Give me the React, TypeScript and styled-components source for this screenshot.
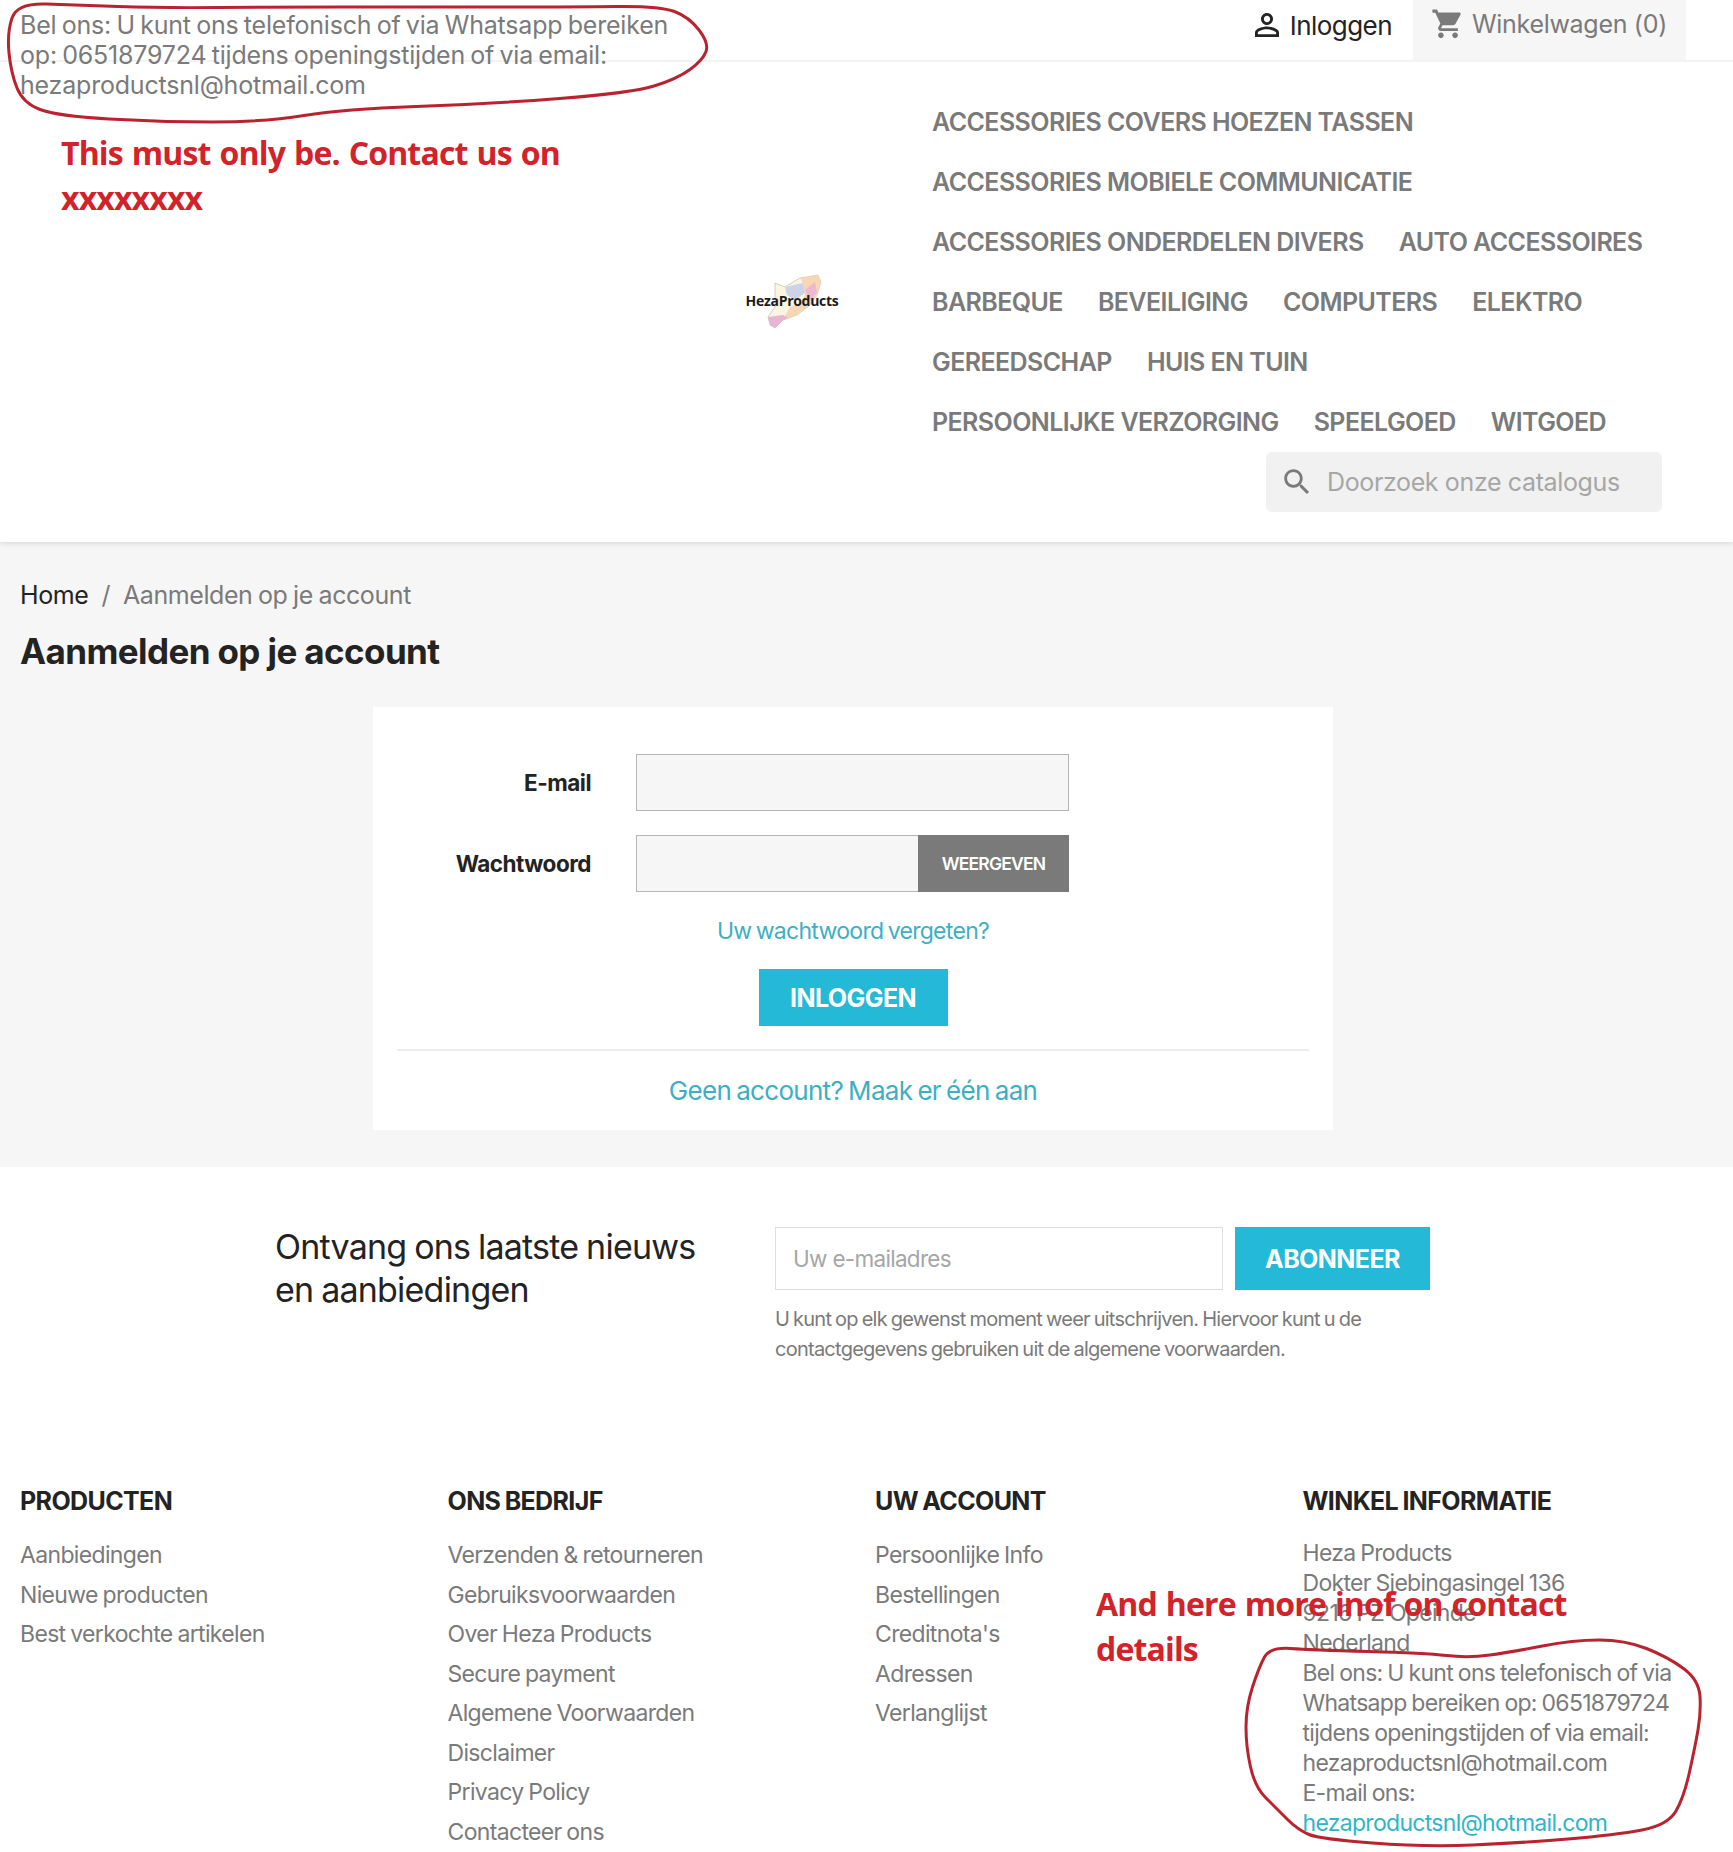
import React from "react";
import styled, { createGlobalStyle } from "styled-components";

const Global = createGlobalStyle`
  * { box-sizing: border-box; }
  html, body { margin: 0; padding: 0; background: #fff; }
  body { font-family: Inter, "Noto Sans", sans-serif; color: #7a7a7a; }
`;

const Page = styled.div`
  position: relative;
  width: 1733px;
  height: 1852px;
  overflow: hidden;
  background: #fff;
`;

const Header = styled.header`
  position: relative;
  background: #fff;
  box-shadow: 0 2px 5px rgba(0, 0, 0, 0.11);
`;

const TopBar = styled.div`
  display: flex;
  justify-content: space-between;
  height: 62px;
  padding: 0 47px 0 20px;
  border-bottom: 2px solid #f3f3f3;
`;

const TopInfo = styled.div`
  width: 672px;
  padding-top: 10px;
  font-size: 25px;
  line-height: 30px;
  letter-spacing: -0.2px;
  word-spacing: -1.5px;
  color: #7a7a7a;
`;

const TopActions = styled.div`
  display: flex;
  height: 60px;
`;

const SignIn = styled.a`
  display: flex;
  align-items: center;
  gap: 5px;
  height: 50px;
  padding-right: 21px;
  font-size: 26px;
  letter-spacing: -0.55px;
  color: #232323;
`;

const Cart = styled.a`
  display: flex;
  align-items: flex-start;
  gap: 7px;
  width: 273px;
  height: 60px;
  padding: 7px 0 0 18px;
  background: #f6f6f6;
  font-size: 25px;
  line-height: 34px;
  letter-spacing: -0.3px;
  color: #7a7a7a;
`;

const Glyph = styled.svg<{ $size: number; $color: string }>`
  flex: none;
  width: ${(p) => p.$size}px;
  height: ${(p) => p.$size}px;
  fill: ${(p) => p.$color};
`;

const HeaderMain = styled.div`
  display: flex;
  padding: 30px 0 30px 0;
`;

const LogoCol = styled.div`
  display: flex;
  align-items: center;
  justify-content: flex-end;
  width: 932px;
  padding-right: 93px;
`;

const LogoArt = styled.svg`
  width: 96px;
  height: 62px;
  margin-top: -2px;
`;

const NavCol = styled.div`
  display: flex;
  flex-direction: column;
  width: 733px;
`;

const Nav = styled.nav`
  display: flex;
  flex-wrap: wrap;
  column-gap: 35px;
`;

const NavLink = styled.a`
  height: 60px;
  font-size: 25px;
  font-weight: 600;
  line-height: 61px;
  letter-spacing: -0.57px;
  white-space: nowrap;
  color: #7a7a7a;
`;

const NavBreak = styled.span`
  flex-basis: 100%;
  height: 0;
`;

const Search = styled.div`
  display: flex;
  align-items: center;
  align-self: flex-end;
  gap: 13px;
  width: 396px;
  height: 60px;
  margin-right: 3px;
  padding-left: 14px;
  border-radius: 6px;
  background: #f1f1f1;
  font-size: 25px;
  letter-spacing: -0.37px;
  color: #a6a6a6;
`;

const Main = styled.main`
  height: 625px;
  padding: 38px 47px 0 20px;
  background: #f6f6f6;
`;

const Crumbs = styled.div`
  display: flex;
  gap: 13px;
  font-size: 25px;
  line-height: 30px;
  letter-spacing: -0.42px;
  word-spacing: -1px;
  color: #7a7a7a;
`;

const CrumbHome = styled.a`
  color: #232323;
`;

const Title = styled.h1`
  margin: 0;
  padding-top: 19px;
  font-size: 35px;
  font-weight: 700;
  line-height: 44px;
  letter-spacing: -0.6px;
  color: #232323;
`;

const Card = styled.section`
  width: 960px;
  height: 423px;
  margin: 34px auto 0;
  padding: 47px 24px 0;
  background: #fff;
`;

const FormRow = styled.div`
  display: flex;
  align-items: center;
  gap: 45px;
  height: 57px;
  margin-bottom: 24px;
`;

const Label = styled.label`
  width: 194px;
  font-size: 22.5px;
  font-weight: 700;
  letter-spacing: -0.5px;
  text-align: right;
  color: #232323;
`;

const Field = styled.div`
  flex: none;
  width: 433px;
  height: 57px;
  border: 1px solid #b5b5b5;
  background: #f6f6f6;
`;

const PasswordField = styled.div`
  display: flex;
  flex: none;
  width: 433px;
  height: 57px;
`;

const PasswordInput = styled.div`
  flex: 1;
  border: 1px solid #b5b5b5;
  border-right: 0;
  background: #f6f6f6;
`;

const ShowButton = styled.button`
  width: 151px;
  border: 0;
  background: #7a7a7a;
  font-family: inherit;
  font-size: 17.5px;
  font-weight: 600;
  letter-spacing: -0.8px;
  color: #fff;
`;

const CenterLink = styled.a<{ $size: number; $lh: number; $top: number }>`
  display: block;
  margin-top: ${(p) => p.$top}px;
  font-size: ${(p) => p.$size}px;
  line-height: ${(p) => p.$lh}px;
  letter-spacing: -0.7px;
  word-spacing: -1.5px;
  text-align: center;
  color: #3dafc4;
`;

const SubmitWrap = styled.div`
  display: flex;
  justify-content: center;
  margin-top: 23px;
`;

const PrimaryButton = styled.button<{ $w: number; $h: number }>`
  width: ${(p) => p.$w}px;
  height: ${(p) => p.$h}px;
  border: 0;
  background: #24b9d7;
  font-family: inherit;
  font-size: 25px;
  font-weight: 700;
  letter-spacing: -0.55px;
  color: #fff;
`;

const Rule = styled.hr`
  height: 2px;
  margin: 23px 0 0;
  border: 0;
  background: #ececec;
`;

const Newsletter = styled.section`
  display: flex;
  height: 319px;
  padding: 58px 0 0 275px;
`;

const NewsTitle = styled.h2`
  flex: none;
  width: 500px;
  margin: 0;
  font-size: 34px;
  font-weight: 400;
  line-height: 43px;
  letter-spacing: -0.78px;
  word-spacing: -1px;
  color: #232323;
`;

const NewsBody = styled.div`
  width: 660px;
  padding-top: 2px;
`;

const NewsForm = styled.div`
  display: flex;
  gap: 12px;
`;

const NewsInput = styled.div`
  display: flex;
  align-items: center;
  width: 448px;
  height: 63px;
  padding-left: 17px;
  border: 1px solid #dedede;
  font-size: 22.5px;
  letter-spacing: -0.7px;
  color: #a6a6a6;
`;

const NewsNote = styled.p`
  margin: 14px 0 0;
  font-size: 20px;
  line-height: 30px;
  letter-spacing: -0.75px;
  word-spacing: -1px;
  color: #7a7a7a;
`;

const FooterGrid = styled.footer`
  display: grid;
  grid-template-columns: repeat(4, 427.5px);
  padding-left: 20px;
`;

const ColTitle = styled.h3<{ $gap: number }>`
  margin: 0 0 ${(p) => p.$gap}px;
  font-size: 25px;
  font-weight: 700;
  line-height: 30px;
  letter-spacing: -0.62px;
  word-spacing: -1px;
  white-space: nowrap;
  color: #232323;
`;

const LinkList = styled.ul`
  margin: 0;
  padding: 0;
  list-style: none;
`;

const LinkItem = styled.li`
  height: 39.5px;
  font-size: 23px;
  line-height: 39.5px;
  letter-spacing: -0.66px;
  word-spacing: -1px;
  color: #7a7a7a;
`;

const StoreInfo = styled.div`
  width: 400px;
  font-size: 23px;
  line-height: 30px;
  letter-spacing: -0.7px;
  word-spacing: -1px;
  color: #7a7a7a;
`;

const StoreMail = styled.a`
  display: block;
  color: #2fb5c9;
`;

const Annotation = styled.div<{ $x: number; $y: number; $w: number }>`
  position: absolute;
  left: ${(p) => p.$x}px;
  top: ${(p) => p.$y}px;
  width: ${(p) => p.$w}px;
  font-family: "Open Sans", sans-serif;
  font-size: 32px;
  font-weight: 700;
  line-height: 45px;
  letter-spacing: -0.85px;
  word-spacing: 1.5px;
  color: #d2232a;
`;

const Scribble = styled.svg`
  position: absolute;
  left: 0;
  top: 0;
  width: 1733px;
  height: 1852px;
  pointer-events: none;
`;

const smooth = (pts: number[][]) => {
  const mid = (a: number[], b: number[]) => [(a[0] + b[0]) / 2, (a[1] + b[1]) / 2];
  let d = "";
  pts.forEach((p, i) => {
    const next = pts[(i + 1) % pts.length];
    const m = mid(p, next);
    if (i === 0) d += `M${mid(pts[pts.length - 1], p).join(" ")} `;
    d += `Q${p.join(" ")} ${m.join(" ")} `;
  });
  return d + "Z";
};

const topLoop = [[17,3],[75,5],[161,8],[276,7],[402,7],[574,7],[660,6],[689,17],[709,43],[703,60],[677,79],[631,93],[488,104],[344,109],[264,122],[161,122],[57,116],[23,103],[11,73],[7,33]];
const bottomLoop = [[1270,1647],[1311,1650],[1425,1653],[1468,1658],[1512,1652],[1573,1640],[1625,1640],[1668,1657],[1699,1680],[1701,1713],[1695,1747],[1684,1797],[1668,1825],[1616,1835],[1520,1843],[1425,1847],[1320,1839],[1298,1830],[1276,1808],[1255,1787],[1246,1747],[1246,1707],[1259,1667]];

const NAV: (string | null)[] = [
  "ACCESSORIES COVERS HOEZEN TASSEN", null,
  "ACCESSORIES MOBIELE COMMUNICATIE", null,
  "ACCESSORIES ONDERDELEN DIVERS", "AUTO ACCESSOIRES", null,
  "BARBEQUE", "BEVEILIGING", "COMPUTERS", "ELEKTRO", null,
  "GEREEDSCHAP", "HUIS EN TUIN", null,
  "PERSOONLIJKE VERZORGING", "SPEELGOED", "WITGOED",
];

const COLS = [
  { title: "PRODUCTEN", links: ["Aanbiedingen", "Nieuwe producten", "Best verkochte artikelen"] },
  { title: "ONS BEDRIJF", links: ["Verzenden & retourneren", "Gebruiksvoorwaarden", "Over Heza Products", "Secure payment", "Algemene Voorwaarden", "Disclaimer", "Privacy Policy", "Contacteer ons"] },
  { title: "UW ACCOUNT", links: ["Persoonlijke Info", "Bestellingen", "Creditnota's", "Adressen", "Verlanglijst"] },
];

const Logo = () => (
  <LogoArt viewBox="0 0 96 62">
    <path d="M32 13 L42 17 L57 8 L75 5 L78 12 L74 25 L67 35 L54 45 L40 50 L32 58 L27 55 L25 47 L32 37 Z" fill="#fbf5df" stroke="#a0a0a0" strokeWidth="0.5" />
    <path d="M57 8 L75 5 L78 12 L74 25 L67 35 L54 45 L40 50 L47 37 L60 32 L62 23 L60 13 Z" fill="#f7d6b4" />
    <path d="M42 17 L60 13 L62 23 L52 30 L44 25 Z" fill="#cdd2e6" />
    <path d="M62 20 L72 12 L74 23 L67 30 Z" fill="#ecb9d0" />
    <path d="M25 47 L40 45 L45 48 L40 50 L32 58 L27 55 Z" fill="#e8b4d2" />
    <text x="49" y="36" textAnchor="middle" fontFamily="'Open Sans', sans-serif" fontSize="14" fontWeight="700" letterSpacing="-0.3" fill="#1b1b1b">HezaProducts</text>
  </LogoArt>
);

export default function App() {
  return (
    <Page>
      <Global />
      <Header>
        <TopBar>
          <TopInfo>Bel ons: U kunt ons telefonisch of via Whatsapp bereiken op: 0651879724 tijdens openingstijden of via email: hezaproductsnl@hotmail.com</TopInfo>
          <TopActions>
            <SignIn>
              <Glyph $size={36} $color="#232323" viewBox="0 0 24 24"><path d="M12 5.9c1.16 0 2.1.94 2.1 2.1s-.94 2.1-2.1 2.1S9.9 9.16 9.9 8s.94-2.1 2.1-2.1m0 9c2.97 0 6.1 1.46 6.1 2.1v1.1H5.9V17c0-.64 3.13-2.1 6.1-2.1M12 4C9.79 4 8 5.79 8 8s1.79 4 4 4 4-1.79 4-4-1.79-4-4-4zm0 9c-2.67 0-8 1.34-8 4v3h16v-3c0-2.66-5.33-4-8-4z" /></Glyph>
              Inloggen
            </SignIn>
            <Cart>
              <Glyph $size={34} $color="#7a7a7a" viewBox="0 0 24 24"><path d="M7 18c-1.1 0-1.99.9-1.99 2S5.9 22 7 22s2-.9 2-2-.9-2-2-2zM1 2v2h2l3.6 7.59-1.35 2.45c-.16.28-.25.61-.25.96 0 1.1.9 2 2 2h12v-2H7.42c-.14 0-.25-.11-.25-.25l.03-.12.9-1.83h7.45c.75 0 1.41-.41 1.75-1.03l3.58-6.49c.08-.14.12-.31.12-.48 0-.55-.45-1-1-1H5.21l-.94-2H1zm16 16c-1.1 0-1.99.9-1.99 2s.89 2 1.99 2 2-.9 2-2-.9-2-2-2z" /></Glyph>
              Winkelwagen (0)
            </Cart>
          </TopActions>
        </TopBar>
        <HeaderMain>
          <LogoCol><Logo /></LogoCol>
          <NavCol>
            <Nav>
              {NAV.map((n, i) => (n ? <NavLink key={i}>{n}</NavLink> : <NavBreak key={i} />))}
            </Nav>
            <Search>
              <Glyph $size={34} $color="#7a7a7a" viewBox="0 0 24 24"><path d="M15.5 14h-.79l-.28-.27C15.41 12.59 16 11.11 16 9.5 16 5.91 13.09 3 9.5 3S3 5.91 3 9.5 5.91 16 9.5 16c1.61 0 3.09-.59 4.23-1.57l.27.28v.79l5 4.99L20.49 19l-4.99-5zm-6 0C7.01 14 5 11.99 5 9.5S7.01 5 9.5 5 14 7.01 14 9.5 11.99 14 9.5 14z" /></Glyph>
              Doorzoek onze catalogus
            </Search>
          </NavCol>
        </HeaderMain>
      </Header>
      <Main>
        <Crumbs>
          <CrumbHome>Home</CrumbHome>
          <span>/</span>
          <span>Aanmelden op je account</span>
        </Crumbs>
        <Title>Aanmelden op je account</Title>
        <Card>
          <FormRow>
            <Label>E-mail</Label>
            <Field />
          </FormRow>
          <FormRow>
            <Label>Wachtwoord</Label>
            <PasswordField>
              <PasswordInput />
              <ShowButton>WEERGEVEN</ShowButton>
            </PasswordField>
          </FormRow>
          <CenterLink $size={23} $lh={30} $top={0}>Uw wachtwoord vergeten?</CenterLink>
          <SubmitWrap><PrimaryButton $w={189} $h={57}>INLOGGEN</PrimaryButton></SubmitWrap>
          <Rule />
          <CenterLink $size={26} $lh={36} $top={22}>Geen account? Maak er één aan</CenterLink>
        </Card>
      </Main>
      <Newsletter>
        <NewsTitle>Ontvang ons laatste nieuws<br />en aanbiedingen</NewsTitle>
        <NewsBody>
          <NewsForm>
            <NewsInput>Uw e-mailadres</NewsInput>
            <PrimaryButton $w={195} $h={63}>ABONNEER</PrimaryButton>
          </NewsForm>
          <NewsNote>U kunt op elk gewenst moment weer uitschrijven. Hiervoor kunt u de<br />contactgegevens gebruiken uit de algemene voorwaarden.</NewsNote>
        </NewsBody>
      </Newsletter>
      <FooterGrid>
        {COLS.map((c) => (
          <div key={c.title}>
            <ColTitle $gap={20}>{c.title}</ColTitle>
            <LinkList>{c.links.map((l) => <LinkItem key={l}>{l}</LinkItem>)}</LinkList>
          </div>
        ))}
        <div>
          <ColTitle $gap={22}>WINKEL INFORMATIE</ColTitle>
          <StoreInfo>
            Heza Products<br />Dokter Siebingasingel 136<br />9216 PZ Opeinde<br />Nederland<br />
            Bel ons: U kunt ons telefonisch of via<br />Whatsapp bereiken op: 0651879724<br />tijdens openingstijden of via email:<br />hezaproductsnl@hotmail.com<br />E-mail ons:
            <StoreMail>hezaproductsnl@hotmail.com</StoreMail>
          </StoreInfo>
        </div>
      </FooterGrid>
      <Annotation $x={61} $y={130} $w={560}>This must only be. Contact us on xxxxxxxx</Annotation>
      <Annotation $x={1096} $y={1581} $w={500}>And here more inof on contact details</Annotation>
      <Scribble viewBox="0 0 1733 1852" fill="none" stroke="#b8232f" strokeWidth="3">
        <path d={smooth(topLoop)} />
        <path d={smooth(bottomLoop)} />
      </Scribble>
    </Page>
  );
}
